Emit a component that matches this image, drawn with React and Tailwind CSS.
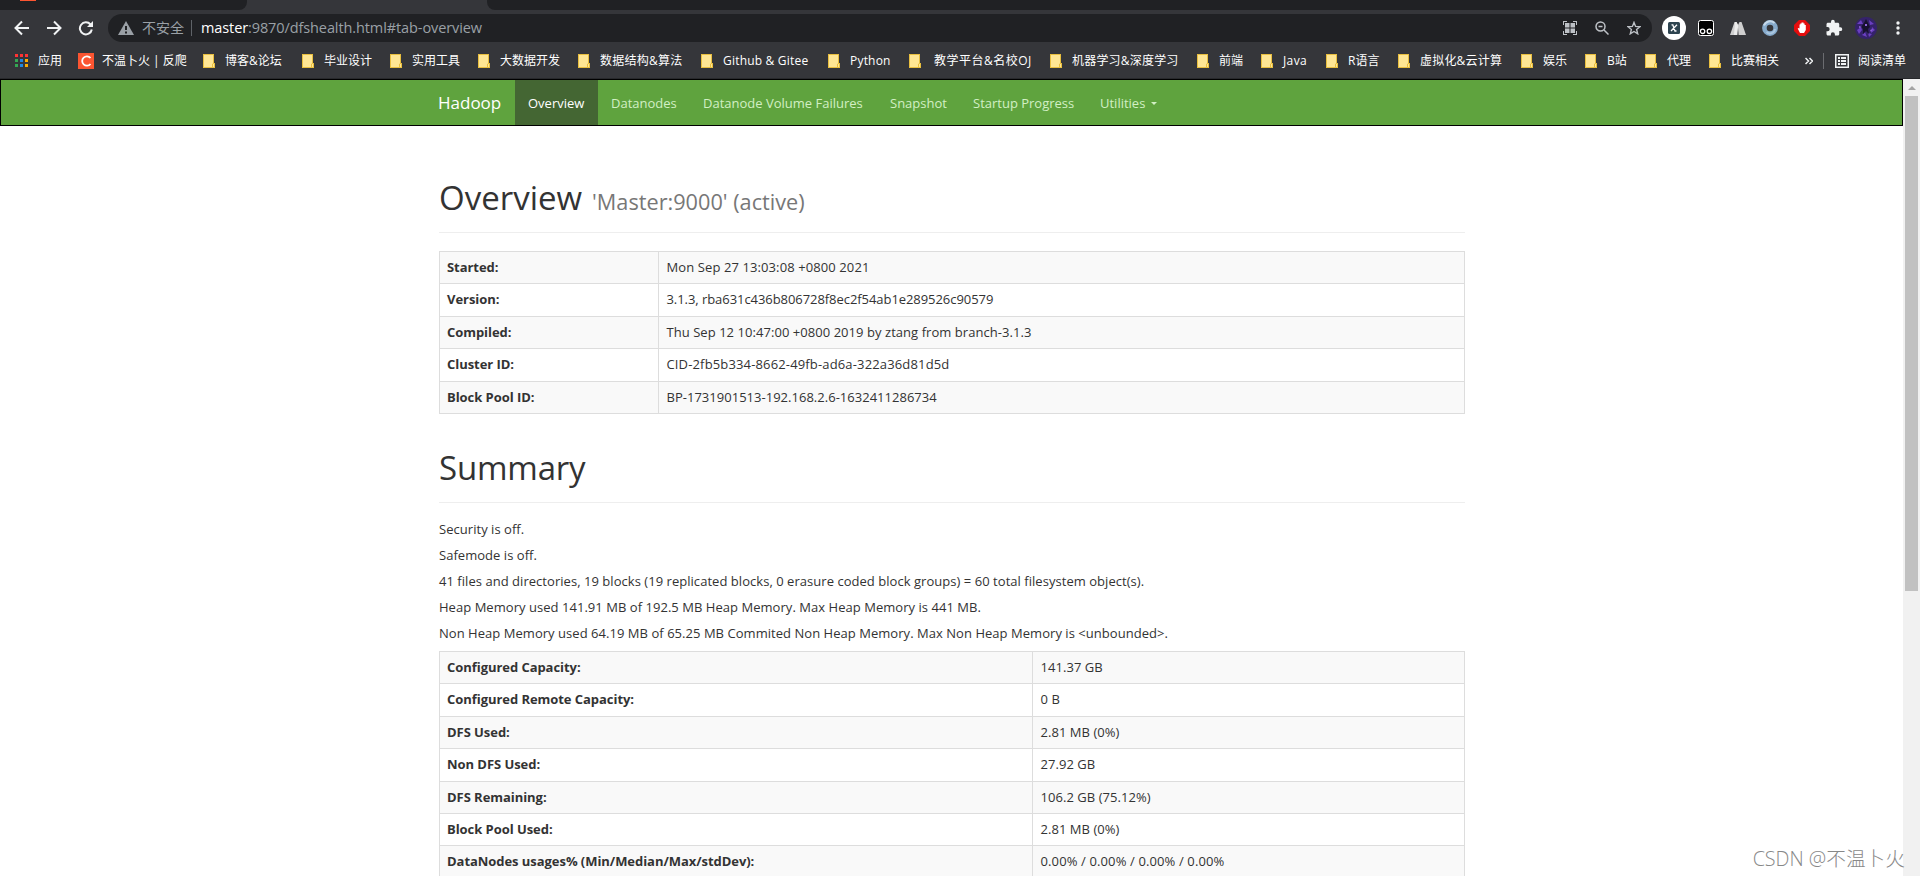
import React from 'react';

const BOOKMARKS = [
  { label: '博客&论坛', width: 'w-[99px]' },
  { label: '毕业设计', width: 'w-[88px]' },
  { label: '实用工具', width: 'w-[88px]' },
  { label: '大数据开发', width: 'w-[100px]' },
  { label: '数据结构&算法', width: 'w-[123px]', text: 'tracking-[0.25px]' },
  { label: 'Github & Gitee', width: 'w-[127px]', text: 'tracking-[0.2px]' },
  { label: 'Python', width: 'w-[81px]', text: 'tracking-[0.2px]' },
  { label: '教学平台&名校OJ', width: 'w-[141px]', text: 'pl-[3px] tracking-[0.5px]' },
  { label: '机器学习&深度学习', width: 'w-[147px]', text: 'tracking-[0.2px]' },
  { label: '前端', width: 'w-[64px]' },
  { label: 'Java', width: 'w-[65px]', text: 'tracking-[0.4px]' },
  { label: 'R语言', width: 'w-[72px]' },
  { label: '虚拟化&云计算', width: 'w-[123px]', text: 'tracking-[0.2px]' },
  { label: '娱乐', width: 'w-[64px]' },
  { label: 'B站', width: 'w-[60px]' },
  { label: '代理', width: 'w-[64px]' },
  { label: '比赛相关', width: 'w-[96px]' },
];

const NAV_ITEMS = [
  { label: 'Overview', width: 'w-[83px]', active: true },
  { label: 'Datanodes', width: 'w-[92px]' },
  { label: 'Datanode Volume Failures', width: 'w-[187px]' },
  { label: 'Snapshot', width: 'w-[83px]' },
  { label: 'Startup Progress', width: 'w-[127px]' },
  { label: 'Utilities', width: 'w-[86px]', caret: true },
];

const OVERVIEW_ROWS = [
  ['Started:', 'Mon Sep 27 13:03:08 +0800 2021', 'tracking-[0.1px]'],
  ['Version:', '3.1.3, rba631c436b806728f8ec2f54ab1e289526c90579', 'tracking-[-0.06px]'],
  ['Compiled:', 'Thu Sep 12 10:47:00 +0800 2019 by ztang from branch-3.1.3'],
  ['Cluster ID:', 'CID-2fb5b334-8662-49fb-ad6a-322a36d81d5d', 'tracking-[0.15px]'],
  ['Block Pool ID:', 'BP-1731901513-192.168.2.6-1632411286734', 'tracking-[0.02px]'],
];

const SUMMARY_LINES = [
  'Security is off.',
  'Safemode is off.',
  '41 files and directories, 19 blocks (19 replicated blocks, 0 erasure coded block groups) = 60 total filesystem object(s).',
  'Heap Memory used 141.91 MB of 192.5 MB Heap Memory. Max Heap Memory is 441 MB.',
  'Non Heap Memory used 64.19 MB of 65.25 MB Commited Non Heap Memory. Max Non Heap Memory is <unbounded>.',
];

const SUMMARY_ROWS = [
  ['Configured Capacity:', '141.37 GB'],
  ['Configured Remote Capacity:', '0 B'],
  ['DFS Used:', '2.81 MB (0%)'],
  ['Non DFS Used:', '27.92 GB'],
  ['DFS Remaining:', '106.2 GB (75.12%)'],
  ['Block Pool Used:', '2.81 MB (0%)'],
  ['DataNodes usages% (Min/Median/Max/stdDev):', '0.00% / 0.00% / 0.00% / 0.00%', 'tracking-[0.12px]'],
];

const InfoTable = ({ rows, keyWidth }) => (
  <div className="w-[1026px] border-x border-t border-[#ddd]">
    {rows.map(([name, value, spacing], index) => (
      <div
        key={name}
        className={`flex h-[32.4px] border-b border-[#ddd] leading-[31.400px] ${index % 2 === 0 ? 'bg-[#f9f9f9]' : 'bg-white'}`}
      >
        <div className={`${keyWidth} shrink-0 border-r border-[#ddd] pl-[7px] font-bold tracking-[-0.05px]`}>{name}</div>
        <div className={`pl-[7.500px] ${spacing || 'tracking-[0.05px]'}`}>{value}</div>
      </div>
    ))}
  </div>
);

const FolderIcon = () => (
  <svg width="12" height="14" viewBox="0 0 12 14" className="shrink-0">
    <path d="M0 0h11v9h1v5H0z" fill="#e9bf3f" />
    <path d="M1 1h9v8.500l-1 .5v3H1z" fill="#ffe694" />
    <path d="M10 10h1v3h-1z" fill="#ffe694" />
  </svg>
);

const TabStrip = () => (
  <div className="flex h-[10px] bg-[#35363a]">
    <div className="w-[247px] rounded-br-[8px] bg-[#202124]">
      <div className="ml-5 h-px w-4 bg-[#fc5531]"></div>
    </div>
    <div className="w-[240px]"></div>
    <div className="flex-1 rounded-bl-[8px] bg-[#202124]"></div>
  </div>
);

const Toolbar = () => (
  <div className="flex h-9 items-center pl-[14px] text-white">
    <svg width="80" height="16" viewBox="0 0 80 16" fill="none" stroke="#f1f3f4" strokeWidth="2">
      <path d="M15 8H2.500M8 1.500L1.500 8 8 14.500" />
      <path d="M33 8h12.500M40 1.500L46.500 8 40 14.500" />
      <path d="M76.500 4.500A6 6 0 1 0 77.800 9.500" />
      <path d="M79 1v6h-6z" fill="#f1f3f4" stroke="none" />
    </svg>
    <div className="ml-[14px] flex h-7 w-[1544px] items-center rounded-full bg-[#202124] pl-[10px]">
      <svg width="16" height="14" viewBox="0 0 16 14">
        <path d="M8 0l8 14H0z" fill="#9aa0a6" />
        <path d="M7 5h2v4H7zM7 10.500h2v2H7z" fill="#202124" />
      </svg>
      <span className="ml-2 w-[49px] -translate-y-px text-[14px] text-[#9aa0a6]">不安全</span>
      <div className="h-4 w-px bg-[#5f6368]"></div>
      <span className="ml-[9px] text-[14.500px] tracking-[-0.1px] text-[#9aa0a6]">
        <span className="text-white">master</span>:9870/dfshealth.html#tab-overview
      </span>
      <div className="ml-auto mr-[11px] flex items-center gap-[18px]">
        <svg width="14" height="14" viewBox="0 0 14 14" fill="#bdc1c6">
          <path d="M0 0h4v1H1v3H0zM10 0h4v4h-1V1h-3zM0 10h1v3h3v1H0zM13 10h1v4h-4v-1h3z" />
          <path d="M2 2h4.500v4.500H2zM7.500 2H12v4.500H7.500zM2 7.500h4.500V12H2zM7.500 7.500H12V12H7.500z" />
        </svg>
        <svg width="14" height="14" viewBox="0 0 14 14" fill="none" stroke="#bdc1c6" strokeWidth="1.500">
          <circle cx="5.500" cy="5.500" r="4.500" />
          <path d="M9 9l4.500 4.500M3.500 5.500h4" />
        </svg>
        <svg width="14" height="14" viewBox="0 0 14 14" fill="none" stroke="#bdc1c6" strokeWidth="1.400">
          <path d="M7 1.400l1.600 4 4.400.3-3.400 2.800 1.100 4.300L7 10.500l-3.700 2.300 1.100-4.300L1 5.700l4.400-.3z" />
        </svg>
      </div>
    </div>
    <div className="ml-[10px] flex items-center">
      <svg width="24" height="24" viewBox="0 0 24 24">
        <circle cx="12" cy="12" r="12" fill="#fff" />
        <rect x="6" y="6" width="12" height="12" rx="1.500" fill="#2e4450" />
        <path d="M9.500 8.800h1.300l2.200 6.200h1.500M15 8.800l-6 6.200" fill="none" stroke="#fff" strokeWidth="1.300" />
      </svg>
      <svg className="ml-3" width="16" height="16" viewBox="0 0 16 16">
        <rect x=".5" y=".5" width="15" height="15" rx="2" fill="#000" stroke="#fff" />
        <circle cx="4.600" cy="11.300" r="2.200" fill="#000" stroke="#fff" strokeWidth="1.300" />
        <circle cx="11.400" cy="11.300" r="2.200" fill="#000" stroke="#fff" strokeWidth="1.300" />
      </svg>
      <svg className="ml-4" width="16" height="14" viewBox="0 0 16 14">
        <path d="M0 14L4.500 1h2L8 4l1.500-3h2L16 14z" fill="#cfcfcf" />
        <path d="M5 1h1.500L8 4v10H4z" fill="#ececec" />
        <path d="M8 6.500l1 7.500H7z" fill="#77787a" />
      </svg>
      <svg className="ml-4" width="16" height="16" viewBox="0 0 16 16">
        <circle cx="8" cy="8" r="5.600" fill="none" stroke="#86aacb" strokeWidth="4.600" />
        <path d="M2 5.500A6.500 6.500 0 0 1 12.500 3" stroke="#c5d9ea" strokeWidth="2" fill="none" />
        <path d="M4.500 12A5 5 0 0 0 13 9" stroke="#a9c5de" strokeWidth="2" fill="none" />
      </svg>
      <svg className="ml-4" width="16" height="16" viewBox="0 0 16 16">
        <path d="M5 0h6l5 5v6l-5 5H5l-5-5V5z" fill="#e40d0d" />
        <path d="M5.500 4.500v4L4.300 8l-.6.600L6 13h4l1.800-3V5h-1.200V3.500H9.500v-1H7.500v1H6.300v1z" fill="#fff" />
      </svg>
      <svg className="ml-[15px]" width="18" height="18" viewBox="0 0 24 24" fill="#f1f3f4">
        <path d="M20.500 11H19V7c0-1.100-.9-2-2-2h-4V3.500a2.500 2.500 0 0 0-5 0V5H4c-1.100 0-2 .9-2 2v3.800h1.500a2.700 2.700 0 0 1 0 5.400H2V20c0 1.100.9 2 2 2h3.800v-1.500a2.700 2.700 0 0 1 5.400 0V22H17c1.100 0 2-.9 2-2v-4h1.500a2.500 2.500 0 0 0 0-5z" />
      </svg>
      <svg className="ml-[12px]" width="22" height="22" viewBox="0 0 22 22">
        <circle cx="11" cy="11" r="11" fill="#35226b" />
        <path d="M2 7l4-4 2 4zM14 3l5 4-4 1zM2 13l4-3 1 3-3 4zM17 10l3 3-4 3zM7 18l3-3 2 5zM13 16l4 1-3 3z" fill="#6a3fc0" />
        <path d="M9 6l2-4 2 4 2 4-2 2 1 5-3-3-3 3 0-5-2-2z" fill="#17122f" />
        <path d="M10 7h2v2h-2zM4 9l3 1-3 1zM15 13l3-1-2 3z" fill="#8f63d8" />
      </svg>
      <svg className="ml-[19px]" width="4" height="14" viewBox="0 0 4 14" fill="#f1f3f4">
        <circle cx="2" cy="2" r="1.700" />
        <circle cx="2" cy="7" r="1.700" />
        <circle cx="2" cy="12" r="1.700" />
      </svg>
    </div>
  </div>
);

const APP_DOTS = ['#f33', '#f33', '#f33', '#34a853', '#1e88e5', '#fbab00', '#34a853', '#1e88e5', '#fbab00'];

const BookmarkBar = () => (
  <div className="flex h-8 items-center whitespace-nowrap pb-[3px] pl-[15px] text-[12px] text-white">
    <svg width="13" height="13" viewBox="0 0 13 13">
      {APP_DOTS.map((color, i) => (
        <rect key={i} x={(i % 3) * 5} y={Math.floor(i / 3) * 5} width="3" height="3" fill={color} />
      ))}
    </svg>
    <span className="ml-[10px] w-10">应用</span>
    <svg width="16" height="16" viewBox="0 0 16 16">
      <path d="M0 0h16v16H0z" fill="#fc5531" />
      <path d="M12.500 5A4.700 4.700 0 1 0 12.500 11" fill="none" stroke="#fff" strokeWidth="1.800" />
    </svg>
    <span className="ml-2 w-[101px]">不温卜火 | 反爬</span>
    {BOOKMARKS.map(({ label, width, text }) => (
      <div key={label} className={`flex shrink-0 items-center ${width}`}>
        <FolderIcon />
        <span className={`ml-[10px] ${text || ''}`}>{label}</span>
      </div>
    ))}
    <svg width="8" height="8" viewBox="0 0 8 8" fill="none" stroke="#f1f3f4" strokeWidth="1.500">
      <path d="M.5 1l3 3-3 3M4.500 1l3 3-3 3" />
    </svg>
    <div className="ml-[10px] h-4 w-px bg-[#6b6c70]"></div>
    <svg className="ml-[11px]" width="14" height="14" viewBox="0 0 14 14">
      <rect x=".75" y=".75" width="12.500" height="12.500" fill="none" stroke="#f1f3f4" strokeWidth="1.500" />
      <path d="M3 3h2v2H3zM6 3h5v2H6zM3 6h2v2H3zM6 6h5v2H6zM3 9h2v2H3zM6 9h5v2H6z" fill="#f1f3f4" />
    </svg>
    <span className="ml-[9px]">阅读清单</span>
  </div>
);

const Navbar = () => (
  <div className="flex h-[47px] border border-black bg-[#5fa33e]">
    <div className="w-[514px] pl-[437px] text-[17px] leading-[45px] text-white">Hadoop</div>
    {NAV_ITEMS.map(({ label, width, active, caret }) => (
      <div
        key={label}
        className={`flex items-center whitespace-nowrap pt-[2px] pl-[13px] ${width} ${active ? 'bg-[#446633] text-white' : 'text-[#d2efc4]'}`}
      >
        {label}
        {caret && <div className="ml-[6px] border-x-[3.5px] border-t-[3.5px] border-x-transparent border-t-[#d2efc4]"></div>}
      </div>
    ))}
  </div>
);

const App = () => {
  return (
    <div className="flex h-[876px] w-[1920px] flex-col overflow-hidden bg-white font-['Open_Sans','Noto_Sans_CJK_SC',sans-serif] text-[13px] text-[#333]">
      {/* Browser chrome */}
      <div className="h-[79px] shrink-0 border-b border-[#28292c] bg-[#35363a]">
        <TabStrip />
        <Toolbar />
        <BookmarkBar />
      </div>

      <div className="relative flex min-h-0 flex-1">
        {/* Page */}
        <div className="w-[1903px] overflow-hidden">
          <Navbar />
          <div className="ml-[439px] w-[1026px]">
            <h1 className="flex h-[107px] items-end border-b border-[#eee] pb-[4px] text-[33px] leading-[52px]">
              <span>
                Overview
                <small className="ml-[10px] text-[21.700px] text-[#777]">'Master:9000' (active)</small>
              </span>
            </h1>
            <div className="mt-[18px]">
              <InfoTable rows={OVERVIEW_ROWS} keyWidth="w-[219px]" />
            </div>
            <h1 className="flex h-[89px] items-end border-b border-[#eee] pb-[8px] text-[33px] leading-[52px] tracking-[-0.2px]">
              Summary
            </h1>
            <div className="mt-[13px]">
              {SUMMARY_LINES.map((line) => (
                <p key={line} className="h-[26px] whitespace-nowrap leading-[26px] tracking-[0.04px]">{line}</p>
              ))}
            </div>
            <div className="mt-[5px]">
              <InfoTable rows={SUMMARY_ROWS} keyWidth="w-[593px]" />
            </div>
          </div>
        </div>

        {/* Scrollbar */}
        <div className="flex w-[17px] flex-col items-center bg-[#f1f1f1]">
          <div className="mt-[7px] h-[10px]">
            <div className="border-x-4 border-b-4 border-x-transparent border-b-[#a3a3a3]"></div>
          </div>
          <div className="h-[495px] w-[13px] bg-[#c1c1c1]"></div>
        </div>

        {/* Watermark */}
        <div className="absolute right-[15px] bottom-[2px] text-[19.700px] font-light leading-[30px] text-[#888]">CSDN @不温卜火</div>
      </div>
    </div>
  );
};

export default App;
